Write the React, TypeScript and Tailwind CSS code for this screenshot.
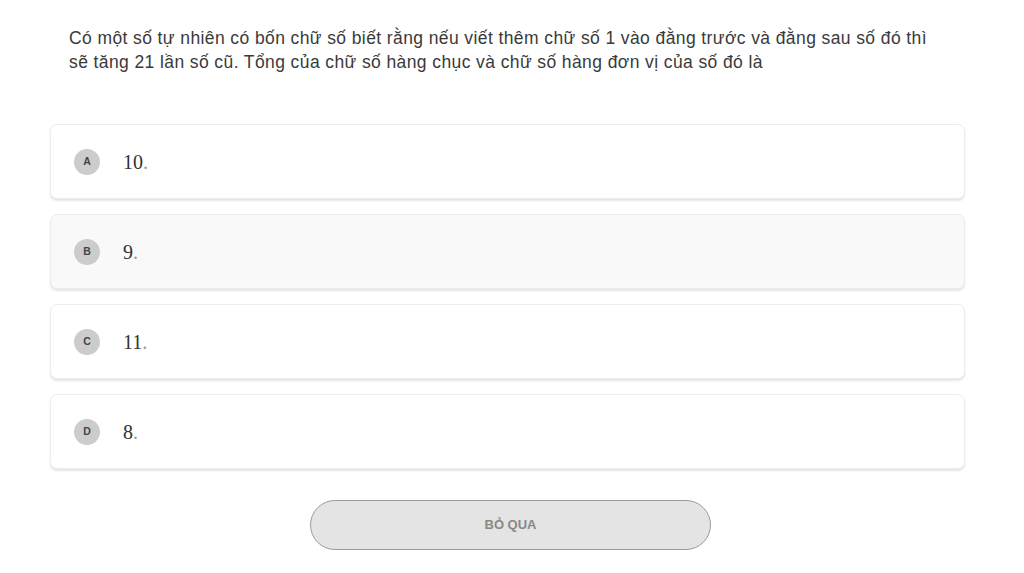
import React from "react";

type Choice = {
  key: string;
  value: string;
};

const choices: Choice[] = [
  { key: "A", value: "10" },
  { key: "B", value: "9" },
  { key: "C", value: "11" },
  { key: "D", value: "8" },
];

const App = () => {
  return (
    <div className="min-h-screen bg-white pt-[26px] font-['Liberation_Sans',Arial,sans-serif]">
      {/* đề bài */}
      <p className="ml-[69px] mr-[40px] text-[17.5px] leading-[24px] text-[#3a3a3a] tracking-[0.4px]">
        Có một số tự nhiên có bốn chữ số biết rằng nếu viết thêm chữ số 1 vào đằng trước và đằng sau số đó thì
        <br />
        sẽ tăng 21 lần số cũ. Tổng của chữ số hàng chục và chữ số hàng đơn vị của số đó là
      </p>

      {/* đáp án */}
      <div className="mt-[50px] ml-[50px] w-[915px] flex flex-col gap-[15px]">
        {choices.map((c) => (
          <div
            key={c.key}
            className={
              c.key === "B"
                ? "h-[75px] flex items-center rounded-[7px] border border-[#ececec] bg-[#f9f9f9] shadow-[0_2px_2px_rgba(0,0,0,0.1)]"
                : "h-[75px] flex items-center rounded-[7px] border border-[#ececec] bg-white shadow-[0_2px_2px_rgba(0,0,0,0.1)]"
            }
          >
            <span className="ml-[23px] w-[26px] h-[26px] rounded-full bg-[#cccccc] flex items-center justify-center text-[10.5px] font-bold text-[#444]">
              {c.key}
            </span>
            <span className="ml-[23px] font-['Liberation_Serif','Times_New_Roman',serif] text-[20px] text-[#333]">
              {c.value}
              <span className="text-[#999]">.</span>
            </span>
          </div>
        ))}
      </div>

      {/* nút bỏ qua */}
      <div className="mt-[31px] flex justify-center pr-[3px]">
        <button className="w-[401px] h-[50px] rounded-full border-[1.5px] border-[#9a9a9a] bg-[#e4e4e4] text-[13px] font-bold text-[#888]">
          BỎ QUA
        </button>
      </div>
    </div>
  );
};

export default App;
